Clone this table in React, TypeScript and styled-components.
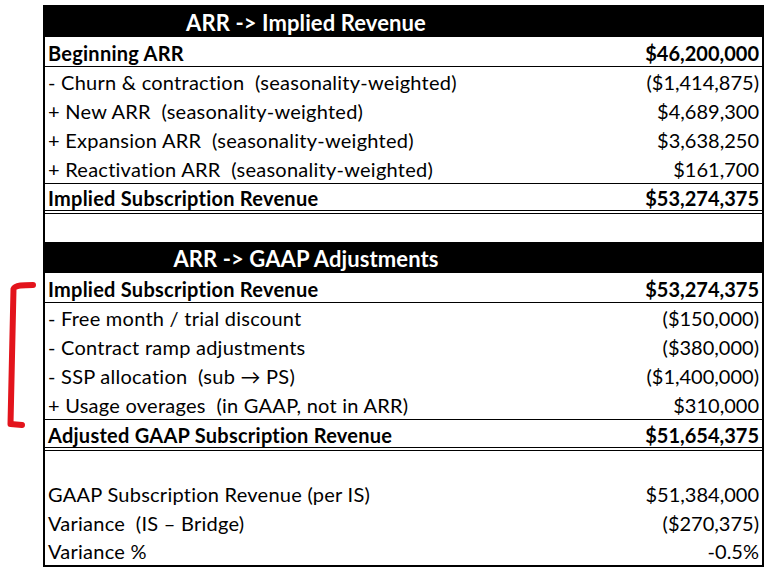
import React from "react";
import styled, { createGlobalStyle } from "styled-components";

const GlobalStyle = createGlobalStyle`
  html, body {
    margin: 0;
    padding: 0;
    background: #ffffff;
  }
  body {
    font-family: Lato, "Open Sans", "Noto Sans", sans-serif;
    color: #000000;
  }
`;

const Page = styled.div`
  position: relative;
  width: 768px;
  height: 573px;
  padding: 5px 0 0 43px;
  box-sizing: border-box;
  background: #ffffff;
`;

const Sheet = styled.div`
  width: 721px;
  border-left: 2px solid #000;
  border-right: 2px solid #000;
  border-bottom: 2px solid #000;
  box-sizing: border-box;
`;

const Header = styled.div<{ $h: number }>`
  height: ${(p) => p.$h}px;
  background: #000000;
  display: flex;
  align-items: center;
`;

const HeaderTitle = styled.div`
  width: 522px;
  text-align: center;
  color: #ffffff;
  font-weight: 700;
  font-size: 22px;
  letter-spacing: 0.1px;
  padding-top: 2px;
`;

type Rule = "none" | "single" | "double";

const Row = styled.div<{ $h: number; $rule: Rule; $bold: boolean }>`
  height: ${(p) => p.$h}px;
  box-sizing: border-box;
  display: flex;
  justify-content: space-between;
  align-items: center;
  padding: ${(p) => (p.$bold ? "2px" : "0")} 3px 0 3px;
  font-size: 20px;
  letter-spacing: 0.25px;
  font-weight: ${(p) => (p.$bold ? 700 : 400)};
  border-bottom: ${(p) =>
    p.$rule === "single"
      ? "1px solid #000"
      : p.$rule === "double"
      ? "4px double #000"
      : "none"};
`;

const Label = styled.span`
  white-space: pre;
`;

const Value = styled.span`
  white-space: pre;
  text-align: right;
  letter-spacing: 0;
`;

const Bracket = styled.svg`
  position: absolute;
  left: 0;
  top: 0;
  pointer-events: none;
`;

type Line = {
  label: string;
  value: string;
  bold?: boolean;
  rule?: Rule;
  h?: number;
};

const section1: Line[] = [
  { label: "Beginning ARR", value: "$46,200,000", bold: true, rule: "single", h: 30 },
  { label: "- Churn & contraction  (seasonality-weighted)", value: "($1,414,875)" },
  { label: "+ New ARR  (seasonality-weighted)", value: "$4,689,300" },
  { label: "+ Expansion ARR  (seasonality-weighted)", value: "$3,638,250" },
  { label: "+ Reactivation ARR  (seasonality-weighted)", value: "$161,700", rule: "single", h: 30 },
  { label: "Implied Subscription Revenue", value: "$53,274,375", bold: true, rule: "double", h: 30 },
  { label: "", value: "", h: 28 },
];

const section2: Line[] = [
  { label: "Implied Subscription Revenue", value: "$53,274,375", bold: true, rule: "single", h: 30 },
  { label: "- Free month / trial discount", value: "($150,000)" },
  { label: "- Contract ramp adjustments", value: "($380,000)" },
  { label: "- SSP allocation  (sub \u2192 PS)", value: "($1,400,000)" },
  { label: "+ Usage overages  (in GAAP, not in ARR)", value: "$310,000", rule: "single", h: 30 },
  { label: "Adjusted GAAP Subscription Revenue", value: "$51,654,375", bold: true, rule: "double", h: 31 },
  { label: "", value: "", h: 28 },
  { label: "GAAP Subscription Revenue (per IS)", value: "$51,384,000" },
  { label: "Variance  (IS \u2013 Bridge)", value: "($270,375)" },
  { label: "Variance %", value: "-0.5%", h: 28 },
];

const renderLines = (lines: Line[], prefix: string) =>
  lines.map((l, i) => (
    <Row
      key={`${prefix}-${i}`}
      $h={l.h ?? 29}
      $rule={l.rule ?? "none"}
      $bold={!!l.bold}
    >
      <Label>{l.label}</Label>
      <Value>{l.value}</Value>
    </Row>
  ));

export default function App() {
  return (
    <>
      <GlobalStyle />
      <Page>
        <Sheet>
          <Header $h={32}>
            <HeaderTitle>ARR -&gt; Implied Revenue</HeaderTitle>
          </Header>
          {renderLines(section1, "a")}
          <Header $h={31}>
            <HeaderTitle>ARR -&gt; GAAP Adjustments</HeaderTitle>
          </Header>
          {renderLines(section2, "b")}
        </Sheet>
        <Bracket width="43" height="573" viewBox="0 0 43 573">
          <path
            d="M33 285 C 24 285 15 285 13.5 289 L 10.5 424 L 22 425"
            fill="none"
            stroke="#e3141c"
            strokeWidth="6"
            strokeLinecap="round"
            strokeLinejoin="round"
          />
        </Bracket>
      </Page>
    </>
  );
}
